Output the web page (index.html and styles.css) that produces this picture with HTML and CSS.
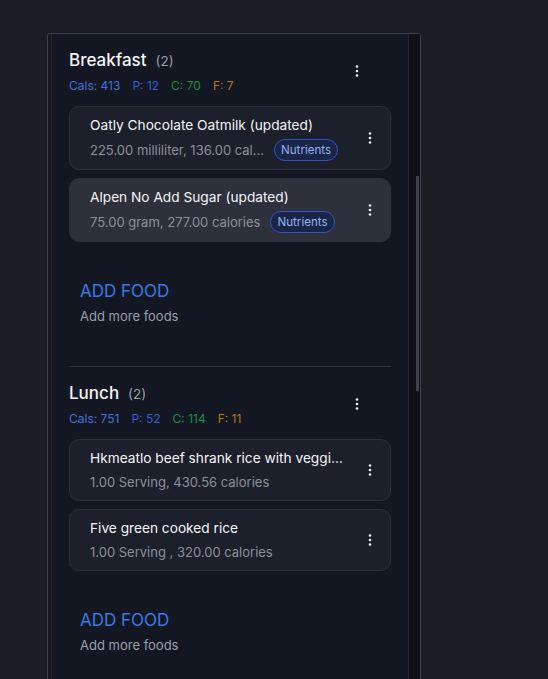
FILE: index.html
```html
<!DOCTYPE html>
<html lang="en">
<head>
<meta charset="utf-8">
<title>Diary</title>
<link rel="stylesheet" href="styles.css">
</head>
<body>
<div class="frame">
  <div class="panel">
    <section class="meal">
      <div class="meal-head">
        <div class="meal-info">
          <div class="meal-title"><span class="meal-name">Breakfast</span><span class="meal-count">(2)</span></div>
          <div class="macros"><span class="m-cal">Cals: 413</span><span class="m-p">P: 12</span><span class="m-c">C: 70</span><span class="m-f">F: 7</span></div>
        </div>
        <button class="kebab head-kebab" aria-label="More"><svg width="4" height="12" viewBox="0 0 4 12"><circle cx="2" cy="1.5" r="1.3"/><circle cx="2" cy="6" r="1.3"/><circle cx="2" cy="10.5" r="1.3"/></svg></button>
      </div>
      <div class="foods">
        <div class="food">
          <div class="food-text">
            <div class="food-name">Oatly Chocolate Oatmilk (updated)</div>
            <div class="food-sub"><span class="food-desc">225.00 milliliter, 136.00 cal...</span><span class="badge">Nutrients</span></div>
          </div>
          <button class="kebab" aria-label="More"><svg width="4" height="12" viewBox="0 0 4 12"><circle cx="2" cy="1.5" r="1.3"/><circle cx="2" cy="6" r="1.3"/><circle cx="2" cy="10.5" r="1.3"/></svg></button>
        </div>
        <div class="food food-hover">
          <div class="food-text">
            <div class="food-name">Alpen No Add Sugar (updated)</div>
            <div class="food-sub"><span class="food-desc">75.00 gram, 277.00 calories</span><span class="badge">Nutrients</span></div>
          </div>
          <button class="kebab" aria-label="More"><svg width="4" height="12" viewBox="0 0 4 12"><circle cx="2" cy="1.5" r="1.3"/><circle cx="2" cy="6" r="1.3"/><circle cx="2" cy="10.5" r="1.3"/></svg></button>
        </div>
      </div>
      <div class="add">
        <div class="add-title">ADD FOOD</div>
        <div class="add-sub">Add more foods</div>
      </div>
    </section>
    <section class="meal">
      <div class="meal-head">
        <div class="meal-info">
          <div class="meal-title"><span class="meal-name">Lunch</span><span class="meal-count">(2)</span></div>
          <div class="macros"><span class="m-cal">Cals: 751</span><span class="m-p">P: 52</span><span class="m-c">C: 114</span><span class="m-f">F: 11</span></div>
        </div>
        <button class="kebab head-kebab" aria-label="More"><svg width="4" height="12" viewBox="0 0 4 12"><circle cx="2" cy="1.5" r="1.3"/><circle cx="2" cy="6" r="1.3"/><circle cx="2" cy="10.5" r="1.3"/></svg></button>
      </div>
      <div class="foods">
        <div class="food">
          <div class="food-text">
            <div class="food-name">Hkmeatlo beef shrank rice with veggi…</div>
            <div class="food-sub"><span class="food-desc">1.00 Serving, 430.56 calories</span></div>
          </div>
          <button class="kebab" aria-label="More"><svg width="4" height="12" viewBox="0 0 4 12"><circle cx="2" cy="1.5" r="1.3"/><circle cx="2" cy="6" r="1.3"/><circle cx="2" cy="10.5" r="1.3"/></svg></button>
        </div>
        <div class="food">
          <div class="food-text">
            <div class="food-name">Five green cooked rice</div>
            <div class="food-sub"><span class="food-desc">1.00 Serving , 320.00 calories</span></div>
          </div>
          <button class="kebab" aria-label="More"><svg width="4" height="12" viewBox="0 0 4 12"><circle cx="2" cy="1.5" r="1.3"/><circle cx="2" cy="6" r="1.3"/><circle cx="2" cy="10.5" r="1.3"/></svg></button>
        </div>
      </div>
      <div class="add">
        <div class="add-title">ADD FOOD</div>
        <div class="add-sub">Add more foods</div>
      </div>
    </section>
  </div>
  <div class="scrollbar"><div class="thumb"></div></div>
</div>
</body>
</html>
```
FILE: styles.css
```css
* { box-sizing: border-box; }
html, body { height: 100%; }
body {
  margin: 0;
  background: #1c1c23;
  font-family: Inter, "Noto Sans", sans-serif;
  overflow: hidden;
}
.frame {
  margin: 33px 0 0 47px;
  width: 374px;
  height: 700px;
  border: 1px solid #3d3e46;
  border-bottom: none;
  border-radius: 3px 3px 0 0;
  display: flex;
  padding-left: 3px;
  background: #17181e;
}
.panel {
  width: 358px;
  background: #131722;
  border-left: 1px solid #22262f;
  border-right: 1px solid #22262f;
  padding: 0 17px;
}
.scrollbar {
  width: 11px;
  background: #101114;
  position: relative;
}
.thumb {
  position: absolute;
  left: 7px;
  top: 142px;
  width: 3px;
  height: 215px;
  background: #3f424b;
}
.meal {
  padding-top: 14px;
  padding-bottom: 40px;
  border-bottom: 1px solid #2a2f3a;
}
.meal-head {
  display: flex;
  align-items: center;
  justify-content: space-between;
}
.meal-title {
  display: flex;
  align-items: baseline;
  height: 24px;
  line-height: 24px;
}
.meal-name {
  font-size: 17px;
  font-weight: 500;
  color: #f3f4f6;
}
.meal-count {
  font-size: 13.5px;
  color: #9a9fa8;
  margin-left: 9px;
}
.macros {
  margin-top: 6px;
  display: flex;
  gap: 12px;
  font-size: 12px;
  line-height: 16px;
}
.m-cal { color: #3e74dd; }
.m-p { color: #2c5fd8; }
.m-c { color: #15913f; }
.m-f { color: #b5761e; }
.kebab {
  background: none;
  border: none;
  padding: 0;
  width: 4px;
  height: 12px;
  display: flex;
  fill: #eceef1;
}
.head-kebab { margin-right: 32px; margin-top: -1px; }
.foods {
  margin-top: 12px;
  display: flex;
  flex-direction: column;
  gap: 8px;
}
.food {
  display: flex;
  align-items: center;
  justify-content: space-between;
  background: #1c202a;
  border: 1px solid #2c313c;
  border-radius: 10px;
  padding: 8px 18px 8px 20px;
}
.food-hover {
  background: #2c313c;
  border-color: #2c313c;
}
.food-name {
  font-size: 13.7px;
  line-height: 20px;
  font-weight: 400;
  color: #f4f5f7;
}
.food-sub {
  margin-top: 4px;
  display: flex;
  align-items: center;
  gap: 10px;
  min-height: 20px;
}
.food-desc {
  font-size: 13px;
  line-height: 20px;
  color: #8b909a;
}
.badge {
  font-size: 11.6px;
  line-height: 20px;
  color: #90b1f0;
  background: #1b2547;
  border: 1px solid #3152c6;
  border-radius: 11px;
  padding: 0 6px;
}
.add {
  margin-top: 37px;
  padding-left: 11px;
}
.add-title {
  font-size: 17px;
  line-height: 24px;
  color: #3b79e6;
}
.add-sub {
  margin-top: 3px;
  font-size: 13px;
  line-height: 20px;
  color: #9a9fa8;
}
```
